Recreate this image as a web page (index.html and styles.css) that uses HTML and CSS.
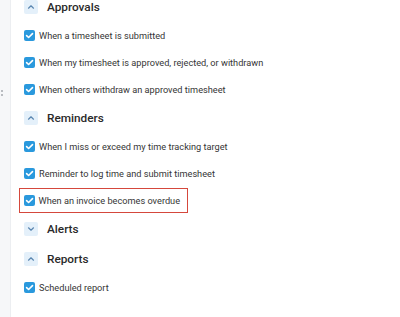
FILE: index.html
```html
<!DOCTYPE html>
<html>
<head>
<meta charset="utf-8">
<link rel="stylesheet" href="styles.css">
</head>
<body>
<div class="page">
  <aside class="rail"><span class="grip"><i class="dot"></i><i class="dot"></i></span></aside>
  <main class="content">
    <div class="list">
      <div class="section-head">
        <span class="chev"><svg viewBox="0 0 14 14" width="14" height="14"><path d="M4.5 8.2 L7 5.8 L9.5 8.2" fill="none" stroke="#5a86b0" stroke-width="1.2" stroke-linecap="round" stroke-linejoin="round"/></svg></span>
        <span class="section-title">Approvals</span>
      </div>
      <div class="item"><span class="cb"><svg viewBox="0 0 11 11" width="11" height="11"><path d="M2.6 5.6 L4.6 7.5 L8.5 3.6" fill="none" stroke="#fff" stroke-width="1.6" stroke-linecap="round" stroke-linejoin="round"/></svg></span><span class="label">When a timesheet is submitted</span></div>
      <div class="item"><span class="cb"><svg viewBox="0 0 11 11" width="11" height="11"><path d="M2.6 5.6 L4.6 7.5 L8.5 3.6" fill="none" stroke="#fff" stroke-width="1.6" stroke-linecap="round" stroke-linejoin="round"/></svg></span><span class="label">When my timesheet is approved, rejected, or withdrawn</span></div>
      <div class="item"><span class="cb"><svg viewBox="0 0 11 11" width="11" height="11"><path d="M2.6 5.6 L4.6 7.5 L8.5 3.6" fill="none" stroke="#fff" stroke-width="1.6" stroke-linecap="round" stroke-linejoin="round"/></svg></span><span class="label">When others withdraw an approved timesheet</span></div>

      <div class="section-head">
        <span class="chev"><svg viewBox="0 0 14 14" width="14" height="14"><path d="M4.5 8.2 L7 5.8 L9.5 8.2" fill="none" stroke="#5a86b0" stroke-width="1.2" stroke-linecap="round" stroke-linejoin="round"/></svg></span>
        <span class="section-title">Reminders</span>
      </div>
      <div class="item"><span class="cb"><svg viewBox="0 0 11 11" width="11" height="11"><path d="M2.6 5.6 L4.6 7.5 L8.5 3.6" fill="none" stroke="#fff" stroke-width="1.6" stroke-linecap="round" stroke-linejoin="round"/></svg></span><span class="label">When I miss or exceed my time tracking target</span></div>
      <div class="item"><span class="cb"><svg viewBox="0 0 11 11" width="11" height="11"><path d="M2.6 5.6 L4.6 7.5 L8.5 3.6" fill="none" stroke="#fff" stroke-width="1.6" stroke-linecap="round" stroke-linejoin="round"/></svg></span><span class="label">Reminder to log time and submit timesheet</span></div>
      <div class="item">
        <div class="highlight"><span class="cb"><svg viewBox="0 0 11 11" width="11" height="11"><path d="M2.6 5.6 L4.6 7.5 L8.5 3.6" fill="none" stroke="#fff" stroke-width="1.6" stroke-linecap="round" stroke-linejoin="round"/></svg></span><span class="label">When an invoice becomes overdue</span></div>
      </div>

      <div class="section-head">
        <span class="chev"><svg viewBox="0 0 14 14" width="14" height="14"><path d="M4.5 5.8 L7 8.2 L9.5 5.8" fill="none" stroke="#5a86b0" stroke-width="1.2" stroke-linecap="round" stroke-linejoin="round"/></svg></span>
        <span class="section-title">Alerts</span>
      </div>

      <div class="section-head">
        <span class="chev"><svg viewBox="0 0 14 14" width="14" height="14"><path d="M4.5 8.2 L7 5.8 L9.5 8.2" fill="none" stroke="#5a86b0" stroke-width="1.2" stroke-linecap="round" stroke-linejoin="round"/></svg></span>
        <span class="section-title">Reports</span>
      </div>
      <div class="item"><span class="cb"><svg viewBox="0 0 11 11" width="11" height="11"><path d="M2.6 5.6 L4.6 7.5 L8.5 3.6" fill="none" stroke="#fff" stroke-width="1.6" stroke-linecap="round" stroke-linejoin="round"/></svg></span><span class="label">Scheduled report</span></div>
    </div>
  </main>
</div>
</body>
</html>
```

FILE: styles.css
```css
html, body {
  margin: 0;
  padding: 0;
  background: #ffffff;
  font-family: Roboto, "Liberation Sans", Arial, sans-serif;
  color: #333333;
}

.page {
  display: flex;
  width: 400px;
  height: 317px;
  overflow: hidden;
}

.rail {
  width: 11px;
  flex: 0 0 11px;
  background: #f6f7f9;
  border-right: 1px solid #eceef1;
  display: flex;
  flex-direction: column;
  padding-top: 90px;
  box-sizing: border-box;
}

.grip {
  display: flex;
  flex-direction: column;
  gap: 2px;
  padding-left: 1px;
}

.dot {
  display: block;
  width: 2px;
  height: 2px;
  border-radius: 1px;
  background: #a4a9ae;
}

.content {
  flex: 1;
  padding-left: 13px;
}

.list {
  display: flex;
  flex-direction: column;
  margin-top: -8.5px;
}

.section-head {
  height: 30px;
  display: flex;
  align-items: center;
  gap: 9px;
}

.chev {
  width: 14px;
  height: 14px;
  background: #e4f0fa;
  border-radius: 2px;
  display: flex;
}

.section-title {
  font-size: 11.8px;
  font-weight: 500;
  color: #2a2a2a;
}

.item {
  height: 27px;
  display: flex;
  align-items: center;
}

.cb {
  width: 11px;
  height: 11px;
  background: #2a99dd;
  border-radius: 2px;
  display: flex;
  margin-right: 4px;
  flex: 0 0 11px;
}

.label {
  font-size: 9.2px;
  color: #363636;
  white-space: nowrap;
}

.highlight {
  display: flex;
  align-items: center;
  height: 25px;
  box-sizing: border-box;
  border: 1.5px solid #d5483c;
  margin-left: -5px;
  padding-left: 3.5px;
  width: 169px;
}
```
